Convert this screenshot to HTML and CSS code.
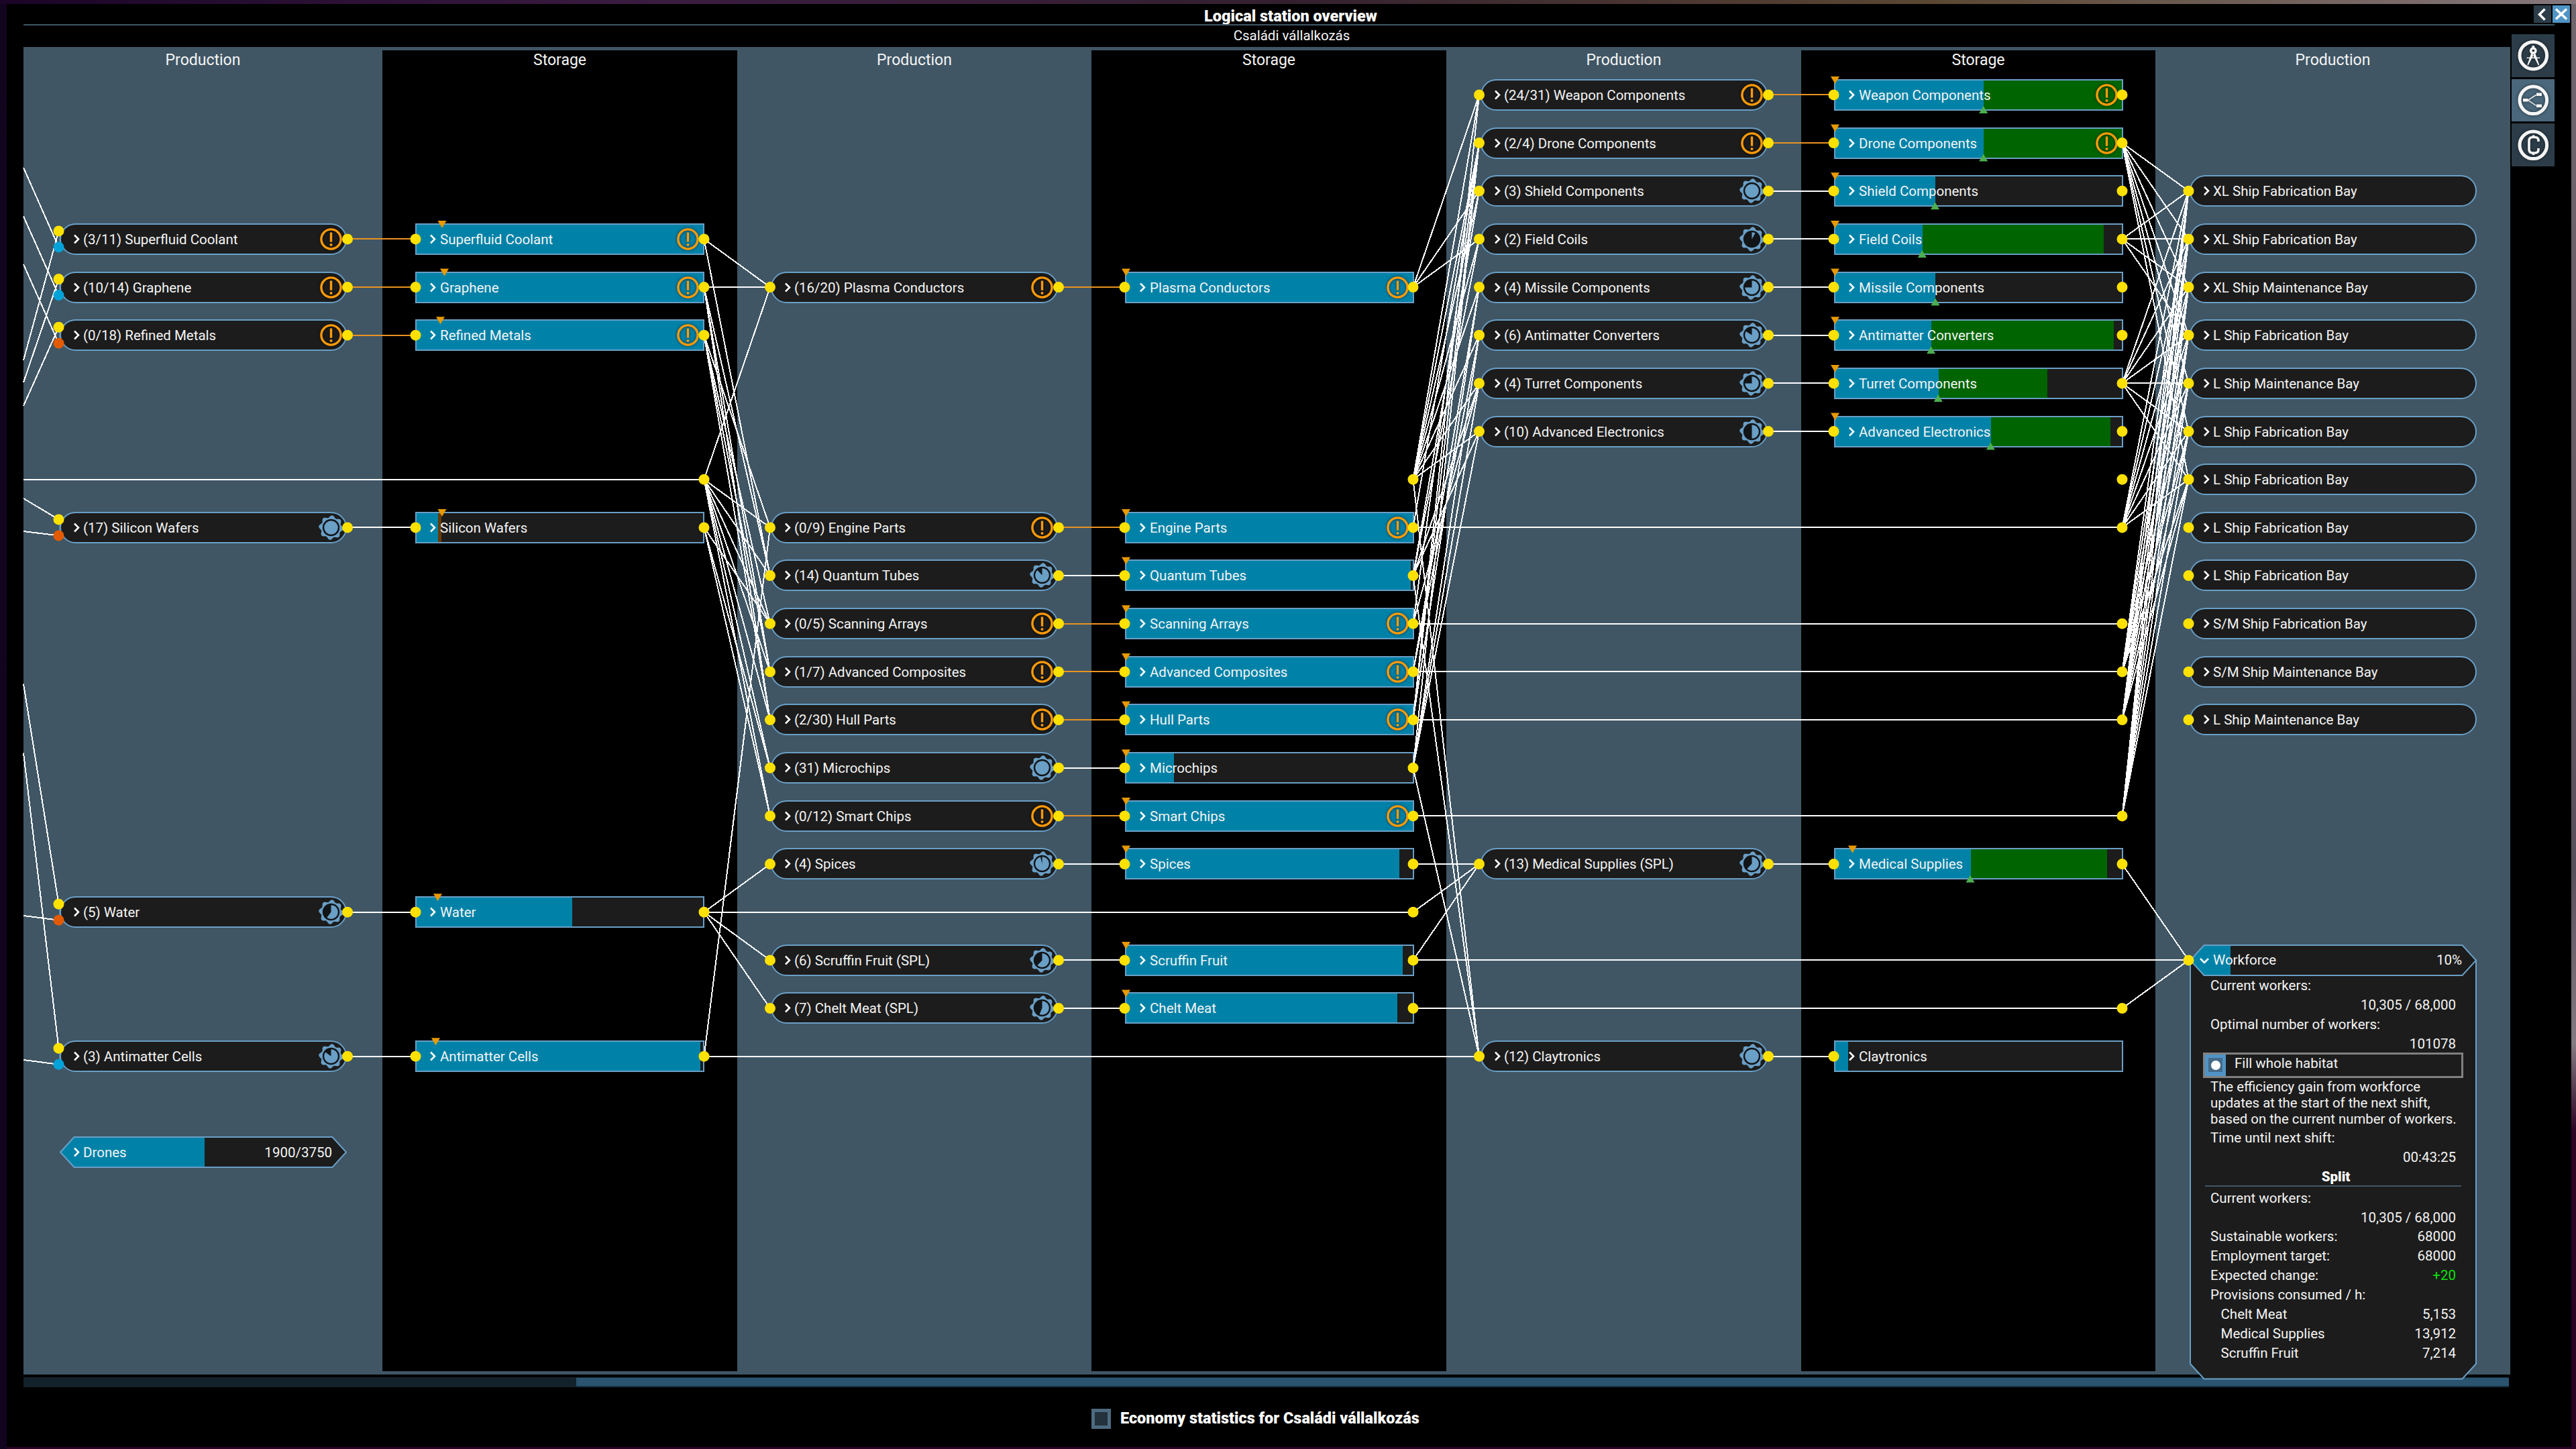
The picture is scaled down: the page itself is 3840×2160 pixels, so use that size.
FILE: index.html
```html
<!DOCTYPE html>
<html lang="en">
<head>
<meta charset="utf-8">
<title>Logical station overview</title>
<link rel="stylesheet" href="styles.css">
</head>
<body>
<main class="window">
  <header class="titlebar">
    <h1 class="title">Logical station overview</h1>
    <div class="window-buttons">
      <button class="window-button" aria-label="Back"><svg viewBox="0 0 26 26"><path d="M16.500 5.500 8.500 13.500l8 8"/></svg></button>
      <button class="window-button window-button-close" aria-label="Close"><svg viewBox="0 0 26 26"><path d="M5 5.500l16 15M21 5.500l-16 15"/></svg></button>
    </div>
  </header>
  <div class="rule"></div>
  <h2 class="subtitle">Családi vállalkozás</h2>

  <div class="body">
    <section class="chart">
      <div class="column column-production"><h3 class="column-title">Production</h3><div class="rows" data-column="p1"></div></div>
      <div class="column column-storage"><h3 class="column-title">Storage</h3><div class="rows" data-column="s1"></div></div>
      <div class="column column-production"><h3 class="column-title">Production</h3><div class="rows" data-column="p2"></div></div>
      <div class="column column-storage"><h3 class="column-title">Storage</h3><div class="rows" data-column="s2"></div></div>
      <div class="column column-production"><h3 class="column-title">Production</h3><div class="rows" data-column="p3"></div></div>
      <div class="column column-storage"><h3 class="column-title">Storage</h3><div class="rows" data-column="s3"></div></div>
      <div class="column column-production"><h3 class="column-title">Production</h3>
        <div class="rows" data-column="p4">
          <article class="workforce">
            <svg class="workforce-shape" viewBox="0 0 428 649">
              <path class="shape-fill shape-line" d="M1 23.500V625l20.500 22.500h385L427 625V23.500"/>
              <path class="shape-fill" d="M1 23.500 21.500 1h385L427 23.500 406.500 46h-385z"/>
              <path class="shape-bar" d="M1 23.500 21.500 1H61v45H21.500z"/>
              <path class="shape-line" d="M1 23.500 21.500 1h385L427 23.500 406.500 46h-385z"/>
            </svg>
            <header class="workforce-head">
              <svg class="chevron" viewBox="0 0 14 10"><path d="M1 2l6 6 6-6"/></svg>
              <span>Workforce</span><span class="value">10%</span>
            </header>
            <div class="fact"><span>Current workers:</span></div>
            <div class="fact"><span class="value">10,305 / 68,000</span></div>
            <div class="fact"><span>Optimal number of workers:</span></div>
            <div class="fact"><span class="value">101078</span></div>
            <div class="habitat"><span class="radio"><span class="radio-well"><span class="radio-dot"></span></span></span><span class="habitat-label">Fill whole habitat</span></div>
            <p class="note">The efficiency gain from workforce<br>updates at the start of the next shift,<br>based on the current number of workers.</p>
            <div class="fact"><span>Time until next shift:</span></div>
            <div class="fact"><span class="value">00:43:25</span></div>
            <h4 class="race">Split</h4>
            <div class="fact"><span>Current workers:</span></div>
            <div class="fact"><span class="value">10,305 / 68,000</span></div>
            <div class="fact"><span>Sustainable workers:</span><span class="value">68000</span></div>
            <div class="fact"><span>Employment target:</span><span class="value">68000</span></div>
            <div class="fact"><span>Expected change:</span><span class="value value-gain">+20</span></div>
            <div class="fact"><span>Provisions consumed / h:</span></div>
            <div class="fact fact-indent"><span>Chelt Meat</span><span class="value">5,153</span></div>
            <div class="fact fact-indent"><span>Medical Supplies</span><span class="value">13,912</span></div>
            <div class="fact fact-indent"><span>Scruffin Fruit</span><span class="value">7,214</span></div>
          </article>
        </div>
      </div>
    </section>

    <nav class="side-tabs">
      <button class="tab" aria-label="Plan"><svg viewBox="0 0 64 64"><circle class="ring" cx="32.300" cy="31.700" r="20.300"/><circle class="thick" cx="32.300" cy="24.500" r="3.600"/><path class="thick" d="M32.300 17v4"/><path class="solid" d="M29.500 27.500l-6.200 18.300 1.400.6 8.600-16.700zM35 27.500l6.300 18.300-1.400.6-8.700-16.700z"/><path class="thin" d="M22.500 35.300h19.600"/></svg></button>
      <button class="tab tab-active" aria-label="Logical overview"><svg viewBox="0 0 64 64"><circle class="ring" cx="32.300" cy="31.300" r="20.300"/><path class="solid" d="M17 29h7.500v4.500H17zM37 20.500h8V25h-8zM37 37.500h8V42h-8z"/><path class="thin" d="M24.500 31.300 36.500 23.500M24.500 31.300 36.500 39.500"/></svg></button>
      <button class="tab" aria-label="Economy"><svg viewBox="0 0 64 64"><circle class="ring" cx="32.300" cy="32.300" r="20.300"/><path class="thick" d="M40 27v-1.500c0-3.500-2.500-5-5.500-5h-3c-3.500 0-5.500 2-5.500 5.500v12.500c0 3.500 2 5.500 5.500 5.500h3c3 0 5.500-1.500 5.500-5V37M32.500 17.500v3M32.500 44v3"/></svg></button>
    </nav>
  </div>

  <div class="scrollbar"><div class="scrollbar-thumb"></div></div>
  <label class="economy"><span class="checkbox"></span>Economy statistics for Családi vállalkozás</label>

  <svg class="layer layer-links" viewBox="0 0 3840 2160"></svg>
  <svg class="layer layer-ports" viewBox="0 0 3840 2160"></svg>
</main>
<script src="script.js"></script>
</body>
</html>
```
FILE: styles.css
```css
* { box-sizing: border-box; }

html, body { margin: 0; height: 100%; }

body {
  width: 3840px;
  height: 2160px;
  overflow: hidden;
  padding: 6px 7px 3px 10px;
  font: 400 20.5px/1 Roboto, "Noto Sans", sans-serif;
  color: #f4f4f4;
  background:
    linear-gradient(90deg, #1a0527, #3a1c40 25%, #33202f 50%, #5a4733 75%, #85777c) top / 100% 6px no-repeat,
    linear-gradient(#70666e, #665c66 35%, #584f5c 60%, #857a82 72%, #2e0426 78%, #2a0222) right / 7px 100% no-repeat,
    linear-gradient(#12051f, #12031f) left / 10px 100% no-repeat,
    #2a0326;
}

h1, h2, h3, h4, p { margin: 0; font: inherit; }
button { padding: 0; border: 0; background: none; display: block; }
svg { display: block; overflow: visible; fill: none; }

.window {
  height: 2151px;
  background: #000;
  display: flex;
  flex-direction: column;
}

/* title area */
.titlebar { height: 30px; display: flex; align-items: flex-start; padding: 2px 2px 0 26px; flex: none; }
.title { flex: 1; text-align: center; font-size: 23.500px; font-weight: 900; line-height: 32px; color: #fff; margin-right: -55px; padding: 0 20px 0 0; }
.window-buttons { display: flex; gap: 2px; position: relative; }
.window-button { width: 26px; height: 26px; background: #2c3d49; }
.window-button-close { background: #4f94c6; }
.window-button path { stroke: #fff; stroke-width: 3.500; }
.rule { height: 2px; margin: 0 25px; background: #405665; flex: none; }
.subtitle { height: 32px; line-height: 30px; text-align: center; padding-left: 10px; margin-right: 2px; flex: none; }

.body { display: flex; height: 1979px; padding-left: 25px; flex: none; }

/* chart */
.chart { width: 3707px; flex: none; display: flex; padding: 5px 0; background: #405665; }
.column { flex: none; width: 529px; }
.column-storage { background: #000; }
.column-title { height: 30.600px; line-height: 30px; font-size: 23px; text-align: center; }
.rows { display: grid; grid-auto-rows: 71.667px; align-items: center; }
.column:nth-child(1) { width: 535px; }
.column:nth-child(3), .column:nth-child(6) { width: 528px; }
.column:nth-child(1) .rows { padding-left: 54px; }
.column:nth-child(2) .rows, .column:nth-child(6) .rows { padding-left: 49px; }
.column:nth-child(3) .rows, .column:nth-child(4) .rows { padding-left: 50px; }
.column:nth-child(5) .rows, .column:nth-child(7) .rows { padding-left: 51px; }

.node {
  grid-column: 1;
  position: relative;
  height: 47px;
  width: 428px;
  display: flex;
  align-items: center;
  padding: 0 4px 0 18px;
  border: 2px solid #6a9fc6;
  background: #1c1c1c;
  white-space: nowrap;
}
.node-production { border-radius: 24px; }
.node-storage { width: 431px; padding: 0 4px 0 19px; }
.node-hex { border: 0; background: none; padding: 0 22px 0 20px; }
.node > .chevron { width: 10px; height: 15px; margin-right: 5px; flex: none; position: relative; }
.node-storage > .chevron { margin-right: 6px; }
.chevron path { stroke: #fff; stroke-width: 2.500; }
.label { position: relative; flex: 1; padding-top: 1.500px; }
.value { margin-left: auto; position: relative; }
.icon { width: 37px; height: 37px; flex: none; position: relative; }
.node-production .icon { margin-right: -1px; }
.icon-warning { filter: drop-shadow(0 0 2px rgba(0, 0, 0, .6)); }
.warning-line { stroke: #ff9a0a; stroke-width: 3.400; }
.warning-dot { fill: #ff9a0a; }
.gear { fill: #6a9fc6; }
.gear-well { fill: #121518; }

/* storage level bars */
.levels { position: absolute; inset: 0; display: flex; }
.level { flex: none; background: #0082a8; }
.level-reserved { background: #006400; }
.level-gap { background: #6a3a05; }
.hex-shape { position: absolute; left: 0; top: 0; width: 428px; height: 47px; }
.shape-fill { fill: #1c1c1c; }
.shape-line { stroke: #6a9fc6; stroke-width: 2; }
.shape-bar { fill: #0082a8; }

/* workforce panel */
.workforce { grid-column: 1; grid-row: 19; align-self: start; position: relative; width: 428px; height: 649px; margin-top: 12.500px; }
.workforce-shape { position: absolute; inset: 0; width: 428px; height: 649px; }
.workforce-head { position: relative; height: 47.500px; display: flex; align-items: center; padding: 1px 22px 1px 15px; }
.workforce-head .chevron { width: 14px; height: 10px; margin-right: 6px; }
.fact { position: relative; height: 28.850px; line-height: 28.850px; display: flex; padding: 0 31px 0 31px; white-space: nowrap; }
.fact-indent { padding-left: 46.500px; }
.value-gain { color: #0be00b; }
.habitat { position: relative; height: 38px; margin: -2px 20px 0; border: 3px solid #808080; display: flex; padding-bottom: 0; }
.radio { width: 31px; background: #4f94c6; display: flex; align-items: center; justify-content: center; }
.radio-well { width: 21px; height: 21px; background: #456b8a; display: flex; align-items: center; justify-content: center; }
.radio-dot { width: 14px; height: 14px; border-radius: 50%; background: #fff; }
.habitat-label { line-height: 26px; margin-left: 13px; }
.note { position: relative; padding: 1px 0 1.500px 31px; line-height: 24.300px; font-size: 20.350px; white-space: nowrap; }
.race { position: relative; height: 28.900px; line-height: 28px; margin: 0 23px 3px; border-bottom: 2px solid #405665; text-align: center; padding-left: 8px; font-weight: 900; color: #fff; }

/* side tabs */
.side-tabs { margin: -19px 0 0 2px; display: flex; flex-direction: column; gap: 3px; }
.tab { width: 64px; height: 64px; background: #2c3d49; }
.tab-active { background: #4a677b; height: 63px; }
.tab svg { width: 64px; height: 64px; filter: drop-shadow(0 0 2px rgba(0, 0, 0, .5)); }
.ring { stroke: #f5f5f5; stroke-width: 5; }
.thick { stroke: #f5f5f5; stroke-width: 3.600; }
.thin { stroke: #f5f5f5; stroke-width: 1.500; }
.solid { fill: #f5f5f5; }

/* bottom */
.scrollbar { height: 15px; margin: 4px 93px 0 25px; background: #13212b; flex: none; }
.scrollbar-thumb { height: 15px; margin-left: 824px; background: #2a546f; border: solid #14303f; border-width: 1px 0 2px; }
.economy { flex: none; height: 30px; margin: 32px 0 0 1617px; display: flex; align-items: center; font-size: 23.460px; font-weight: 900; color: #fff; white-space: nowrap; }
.checkbox { width: 29px; height: 30px; margin-right: 14px; border: 5px solid #4d6a80; background: #23323d; }

/* link overlay */
.layer { position: absolute; left: 0; top: 0; width: 3840px; height: 2160px; pointer-events: none; }
.link { stroke: #fff; stroke-width: 2; shape-rendering: crispEdges; }
.link-warning { stroke: #ea9322; }
.link-stem { stroke: #6a9fc6; stroke-width: 2; }
.port { fill: #ffe100; }
.port-liquid { fill: #00a2d8; }
.port-mineral { fill: #e25b00; }
```
FILE: script.js
```javascript
// Row, label, status ('!' = stalled, number = share of modules cycle), second input port
const production = {
  p1: [[3, '(3/11) Superfluid Coolant', '!', 'liquid'], [4, '(10/14) Graphene', '!', 'liquid'], [5, '(0/18) Refined Metals', '!', 'mineral'],
    [9, '(17) Silicon Wafers', 1, 'mineral'], [17, '(5) Water', .6, 'mineral'], [20, '(3) Antimatter Cells', .85, 'liquid']],
  p2: [[4, '(16/20) Plasma Conductors', '!'], [9, '(0/9) Engine Parts', '!'], [10, '(14) Quantum Tubes', .88], [11, '(0/5) Scanning Arrays', '!'],
    [12, '(1/7) Advanced Composites', '!'], [13, '(2/30) Hull Parts', '!'], [14, '(31) Microchips', 1], [15, '(0/12) Smart Chips', '!'],
    [16, '(4) Spices', .96], [18, '(6) Scruffin Fruit (SPL)', .62], [19, '(7) Chelt Meat (SPL)', .56]],
  p3: [[0, '(24/31) Weapon Components', '!'], [1, '(2/4) Drone Components', '!'], [2, '(3) Shield Components', 1], [3, '(2) Field Coils', .08],
    [4, '(4) Missile Components', .75], [5, '(6) Antimatter Converters', .84], [6, '(4) Turret Components', .75], [7, '(10) Advanced Electronics', .5],
    [16, '(13) Medical Supplies (SPL)', .62], [20, '(12) Claytronics', 1]],
  p4: [[2, 'XL Ship Fabrication Bay'], [3, 'XL Ship Fabrication Bay'], [4, 'XL Ship Maintenance Bay'], [5, 'L Ship Fabrication Bay'],
    [6, 'L Ship Maintenance Bay'], [7, 'L Ship Fabrication Bay'], [8, 'L Ship Fabrication Bay'], [9, 'L Ship Fabrication Bay'],
    [10, 'L Ship Fabrication Bay'], [11, 'S/M Ship Fabrication Bay'], [12, 'S/M Ship Maintenance Bay'], [13, 'L Ship Maintenance Bay']]
};

// Row, label, stock %, reserved-to %, stalled, buy-limit marker x
const storage = {
  s1: [[3, 'Superfluid Coolant', 100, 0, 1, 39.5], [4, 'Graphene', 100, 0, 1, 43], [5, 'Refined Metals', 100, 0, 1, 37],
    [9, 'Silicon Wafers', 7.5, 0, 0, 39.5], [17, 'Water', 54.4, 0, 0, 33], [20, 'Antimatter Cells', 99, 0, 0, 30]],
  s2: [[4, 'Plasma Conductors', 100, 0, 1, 2], [9, 'Engine Parts', 100, 0, 1, 2], [10, 'Quantum Tubes', 99.2, 0, 0, 2], [11, 'Scanning Arrays', 100, 0, 1, 2],
    [12, 'Advanced Composites', 100, 0, 1, 2], [13, 'Hull Parts', 100, 0, 1, 2], [14, 'Microchips', 16.6, 0, 0, 2], [15, 'Smart Chips', 100, 0, 1, 2],
    [16, 'Spices', 95.4, 0, 0, 2], [18, 'Scruffin Fruit', 96.600, 0, 0, 2], [19, 'Chelt Meat', 94.600, 0, 0, 2]],
  s3: [[0, 'Weapon Components', 51.800, 100, 1, 2], [1, 'Drone Components', 51.800, 100, 1, 2], [2, 'Shield Components', 34.900, -1, 0, 2],
    [3, 'Field Coils', 30.400, 93.700, 0, 2], [4, 'Missile Components', 35, -1, 0, 2], [5, 'Antimatter Converters', 33.500, 97.200, 0, 2],
    [6, 'Turret Components', 36, 74.100, 0, 2], [7, 'Advanced Electronics', 54.300, 96, 0, 2], [16, 'Medical Supplies', 47.200, 94.900, 0, 28],
    [20, 'Claytronics', 4.500, 0, 0, null]]
};

const chevron = '<svg class="chevron" viewBox="0 0 10 15"><path d="M2 1.500l6 6-6 6"/></svg>';
const warning = '<svg class="icon icon-warning" viewBox="-18.500 -18.500 37 37"><circle class="warning-line" r="14.600"/><path class="warning-line" d="M0-10V4.200"/><circle class="warning-dot" cy="8.500" r="2"/></svg>';

function gear(share) {
  let rim = '';
  for (let a = 0; a < 360; a += 5) {
    const t = a * Math.PI / 180;
    const r = 16.700 + 1.700 * Math.cos(8 * (t - .1));
    rim += (a ? 'L' : 'M') + (r * Math.sin(t)).toFixed(2) + ' ' + (-r * Math.cos(t)).toFixed(2);
  }
  const e = share * 2 * Math.PI;
  const pie = share === 1
    ? '<circle class="gear" r="10.300"/>'
    : `<path class="gear" d="M0 0V-10.300A10.300 10.300 0 ${share > .5 ? 1 : 0} 1 ${(10.3 * Math.sin(e)).toFixed(2)} ${(-10.3 * Math.cos(e)).toFixed(2)}z"/>`;
  return `<svg class="icon" viewBox="-18.500 -18.500 37 37"><path class="gear" d="${rim}z"/><circle class="gear-well" r="12.700"/>${pie}</svg>`;
}

const place = (key, html) => document.querySelector(`[data-column="${key}"]`).insertAdjacentHTML('afterbegin', html);

for (const key in production) {
  place(key, production[key].map(([row, label, status]) =>
    `<div class="node node-production" style="grid-row:${row + 1}">${chevron}<span class="label">${label}</span>${status === '!' ? warning : status ? gear(status) : ''}</div>`).join(''));
}
for (const key in storage) {
  place(key, storage[key].map(([row, label, stock, reserved, stalled]) => {
    let levels = `<span class="level" style="width:${stock}%"></span>`;
    if (reserved > stock) levels += `<span class="level level-reserved" style="width:${reserved - stock}%"></span>`;
    if (label === 'Silicon Wafers') levels += '<span class="level level-gap" style="width:1.200%"></span>';
    return `<div class="node node-storage" style="grid-row:${row + 1}"><span class="levels">${levels}</span>${chevron}<span class="label">${label}</span>${stalled ? warning : ''}</div>`;
  }).join(''));
}
place('p1', `<div class="node node-hex" style="grid-row:23"><svg class="hex-shape" viewBox="0 0 428 47"><path class="shape-fill" d="M1 23.500 21.500 1h385L427 23.500 406.500 46h-385z"/><path class="shape-bar" d="M1 23.500 21.500 1H216v45H21.500z"/><path class="shape-line" d="M1 23.500 21.500 1h385L427 23.500 406.500 46h-385z"/></svg>${chevron}<span class="label">Drones</span><span class="value">1900/3750</span></div>`);

// Port positions on the canvas
const X = { p1: [87.5, 518], s1: [619.5, 1049.5], p2: [1148, 1578], s2: [1676.5, 2106.5], p3: [2205, 2636], s3: [2733.5, 3163.5], p4: [3262.5] };
const y = row => 141.4 + 71.667 * row;
let links = '', ports = '';
const link = (x1, y1, x2, y2, kind = 'link') => { links += `<path class="${kind}" d="M${x1} ${y1.toFixed(1)}L${x2} ${y2.toFixed(1)}"/>`; };
const port = (x, cy, kind = '') => { ports += `<circle class="port ${kind}" cx="${x}" cy="${cy.toFixed(1)}" r="8"/>`; };

// Links arriving from columns scrolled out of view: y at the chart edge, row, port offset
[[250, 3, 12], [322.5, 4, 12], [394, 5, 12], [537, 3, -12], [570, 4, -12], [605, 5, -12], [743, 9, -12], [792, 9, 12],
  [1019.5, 17, -12], [1365, 17, 12], [1122.5, 20, -12], [1580, 20, 12]].forEach(([from, row, d]) => link(35, from, X.p1[0], y(row) + d));
link(35, y(8), X.s1[1], y(8));

const fan = (from, to, map) => {
  for (const row in map) map[row].forEach(target => link(X[from][1], y(+row), X[to][0], y(target)));
};
fan('s1', 'p2', { 3: [4, 10], 4: [4, 10, 12, 13], 5: [9, 11, 12, 13], 8: [4, 9, 10, 11, 12, 13, 14, 15], 9: [11, 14, 15], 17: [16, 18, 19], 20: [9] });
fan('s2', 'p3', { 4: [0, 2, 3], 8: [0, 1, 2, 3, 4, 5, 6, 7, 20], 9: [1], 10: [2, 3, 6, 7, 20], 11: [1, 6], 12: [4, 5], 13: [0, 1, 4], 14: [1, 5, 6, 7, 20], 16: [16], 17: [16], 18: [16] });
const bays = [2, 3, 4, 5, 6, 7, 8];
fan('s3', 'p4', { 1: bays, 3: [2, 3, 4, 5], 6: bays, 9: bays, 12: bays, 13: bays, 15: bays, 16: [18], 19: [18] });
link(X.s1[1], y(17), X.s2[1], y(17));
link(X.s1[1], y(20), X.p3[0], y(20));
[9, 11, 12, 13, 15, 19].forEach(row => link(X.s2[1], y(row), X.s3[1], y(row)));
link(X.s2[1], y(18), X.p4[0], y(18));

[['p1', 's1'], ['p2', 's2'], ['p3', 's3']].forEach(([from, to]) => production[from].forEach(([row, , status, second]) => {
  link(X[from][1], y(row), X[to][0], y(row), status === '!' ? 'link link-warning' : 'link');
  if (second) {
    link(X[from][0] + 2, y(row) - 12, X[from][0] + 2, y(row) + 12, 'link-stem');
    port(X[from][0], y(row) - 12);
    port(X[from][0], y(row) + 12, 'port-' + second);
  } else {
    port(X[from][0], y(row));
  }
  port(X[from][1], y(row));
  port(X[to][0], y(row));
  if (!(to === 's3' && row === 20)) port(X[to][1], y(row));
}));
production.p4.forEach(([row]) => port(X.p4[0], y(row)));
port(X.p4[0], y(18));
port(X.s1[1], y(8));
[8, 17].forEach(row => port(X.s2[1], y(row)));
[8, 9, 11, 12, 13, 15, 19].forEach(row => port(X.s3[1], y(row)));

// Limit markers above and below the storage bars
for (const key in storage) {
  storage[key].forEach(([row, , stock, reserved, , buy]) => {
    const left = X[key][0], c = y(row);
    if (buy !== null) ports += `<path fill="#e89a00" d="M${left + buy - 6.5} ${c - 27.5}h13l-6.500 11z"/>`;
    if (reserved) {
      const x = left + 2 + 427 * stock / 100;
      ports += `<path fill="#4caf50" d="M${x - 6.5} ${c + 27.5}h13l-6.500 -11z"/>`;
    }
  });
}
document.querySelector('.layer-links').innerHTML = links;
document.querySelector('.layer-ports').innerHTML = ports;
```
